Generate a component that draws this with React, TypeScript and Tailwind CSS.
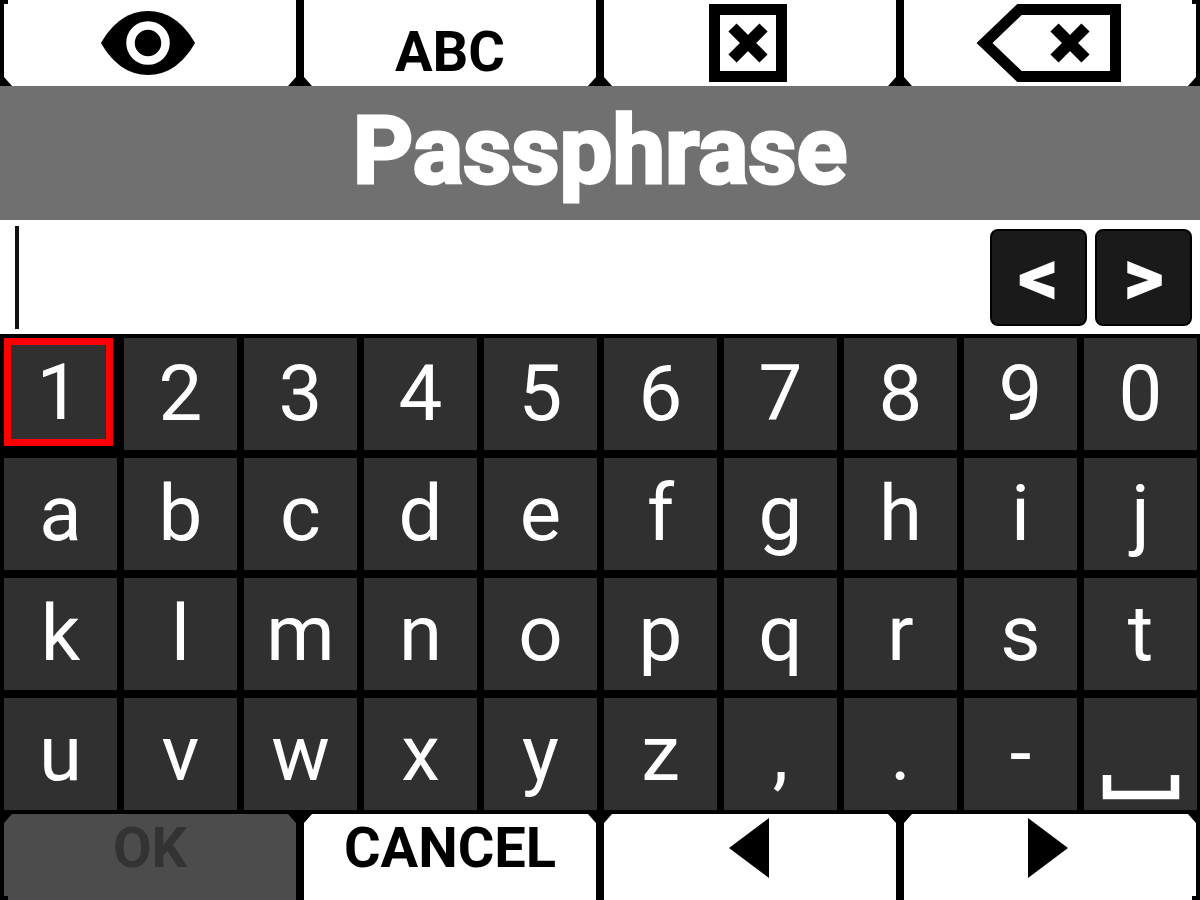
import { useState } from "react";
import type { ReactNode } from "react";

const KEYS = "1234567890abcdefghijklmnopqrstuvwxyz,.-".split("");

const TOP_SHAPES = [
  "[clip-path:polygon(4px_0,100%_0,100%_calc(100%-9px),calc(100%-8px)_100%,8px_100%,0_calc(100%-9px),0_4px,4px_4px)]",
  "[clip-path:polygon(0_0,100%_0,100%_calc(100%-9px),calc(100%-8px)_100%,8px_100%,0_calc(100%-9px))]",
  "[clip-path:polygon(0_0,100%_0,100%_calc(100%-9px),calc(100%-8px)_100%,8px_100%,0_calc(100%-9px))]",
  "[clip-path:polygon(0_0,calc(100%-4px)_0,calc(100%-4px)_4px,100%_4px,100%_calc(100%-9px),calc(100%-8px)_100%,8px_100%,0_calc(100%-9px))]",
];

const BOTTOM_SHAPES = [
  "[clip-path:polygon(8px_0,calc(100%-8px)_0,100%_9px,100%_100%,4px_100%,4px_calc(100%-4px),0_calc(100%-4px),0_9px)]",
  "[clip-path:polygon(8px_0,calc(100%-8px)_0,100%_9px,100%_100%,0_100%,0_9px)]",
  "[clip-path:polygon(8px_0,calc(100%-8px)_0,100%_9px,100%_100%,0_100%,0_9px)]",
  "[clip-path:polygon(8px_0,calc(100%-8px)_0,100%_9px,100%_calc(100%-4px),calc(100%-4px)_calc(100%-4px),calc(100%-4px)_100%,0_100%,0_9px)]",
];

function SoftKey({
  label,
  shape,
  className,
  disabled,
  onClick,
  children,
}: {
  label: string;
  shape: string;
  className: string;
  disabled?: boolean;
  onClick?: () => void;
  children: ReactNode;
}) {
  return (
    <button
      type="button"
      aria-label={label}
      disabled={disabled}
      onClick={onClick}
      className={`flex h-full justify-center bg-white text-[56px] leading-[60px] font-bold text-black disabled:bg-[#4c4c4c] disabled:text-[#333333] ${shape} ${className}`}
    >
      {children}
    </button>
  );
}

function EyeIcon() {
  return (
    <svg viewBox="0 0 94 66" className="h-[66px] w-[94px]" aria-hidden="true">
      <path d="M0 33C12 12 28 1 47 1s35 11 47 32C82 54 66 65 47 65S12 54 0 33Z" fill="black" />
      <circle cx="47" cy="33" r="17.5" fill="black" stroke="white" strokeWidth="8.5" />
    </svg>
  );
}

function ClearIcon() {
  return (
    <svg viewBox="0 0 80 80" className="h-20 w-20" fill="none" stroke="black" aria-hidden="true">
      <rect x="6.5" y="6.5" width="67" height="67" strokeWidth="11" />
      <path d="M24.5 24.5L55.5 55.5M55.5 24.5L24.5 55.5" strokeWidth="11.5" />
    </svg>
  );
}

function BackspaceIcon() {
  return (
    <svg viewBox="0 0 148 80" className="h-20 w-[148px]" fill="none" stroke="black" aria-hidden="true">
      <path d="M10.5 40L45.5 6.5H141.5V73.5H45.5Z" strokeWidth="11" />
      <path d="M80.5 24.5L111.5 55.5M111.5 24.5L80.5 55.5" strokeWidth="11.5" />
    </svg>
  );
}

function CursorButton({ label, children }: { label: string; children: ReactNode }) {
  return (
    <button
      type="button"
      aria-label={label}
      className="flex h-[97px] w-[97px] items-center justify-center rounded-lg border-2 border-black bg-[#1a1a1a] text-[80px] leading-none font-black text-white"
    >
      {children}
    </button>
  );
}

export default function App() {
  const [value, setValue] = useState("");
  const [selected, setSelected] = useState(0);

  const press = (index: number, char: string) => {
    setSelected(index);
    setValue((v) => v + char);
  };

  const keyClass = (index: number) =>
    `flex items-center justify-center bg-[#303030] text-[78px] leading-none ${
      index === selected ? "mr-1 mb-1 border-[7px] border-[#ff0000] pt-0.5" : ""
    }`;

  return (
    <main className="flex min-h-screen flex-col bg-black font-[Roboto,sans-serif] text-white">
      <div className="grid h-[86px] grid-cols-4 gap-2 px-1">
        <SoftKey label="Show passphrase" shape={TOP_SHAPES[0]} className="items-center pr-1">
          <EyeIcon />
        </SoftKey>
        <SoftKey label="ABC" shape={TOP_SHAPES[1]} className="items-end pb-1">
          ABC
        </SoftKey>
        <SoftKey label="Clear" shape={TOP_SHAPES[2]} className="items-center pr-1" onClick={() => setValue("")}>
          <ClearIcon />
        </SoftKey>
        <SoftKey
          label="Backspace"
          shape={TOP_SHAPES[3]}
          className="items-center pr-1"
          onClick={() => setValue((v) => v.slice(0, -1))}
        >
          <BackspaceIcon />
        </SoftKey>
      </div>

      <div className="flex h-[134px] items-center justify-center bg-[#707070] pb-1">
        <label
          htmlFor="passphrase"
          className="text-[94px] leading-none font-bold [-webkit-text-stroke:3px_white]"
        >
          Passphrase
        </label>
      </div>

      <div className="flex h-[114px] items-center gap-2 bg-white pr-2 pl-[15px]">
        <input
          id="passphrase"
          type="text"
          value={value}
          onChange={(e) => setValue(e.target.value)}
          className="h-[103px] min-w-0 flex-1 border-l-4 border-[#111111] bg-white text-[80px] text-black outline-none"
        />
        <CursorButton label="Move cursor left">&lt;</CursorButton>
        <CursorButton label="Move cursor right">&gt;</CursorButton>
      </div>

      <div className="grid flex-1 auto-rows-fr grid-cols-10 gap-x-[7px] gap-y-2 py-1 pr-[3px] pl-1">
        {KEYS.map((char, index) => (
          <button key={char} type="button" className={keyClass(index)} onClick={() => press(index, char)}>
            {char}
          </button>
        ))}
        <button
          type="button"
          aria-label="Space"
          className={keyClass(KEYS.length)}
          onClick={() => press(KEYS.length, " ")}
        >
          <svg viewBox="0 0 112 112" className="h-28 w-28" aria-hidden="true">
            <path d="M22 77V97H90V77" fill="none" stroke="white" strokeWidth="8.5" />
          </svg>
        </button>
      </div>

      <div className="grid h-[86px] grid-cols-4 gap-2 px-1">
        <SoftKey label="OK" shape={BOTTOM_SHAPES[0]} className="items-start pt-1" disabled={value === ""}>
          OK
        </SoftKey>
        <SoftKey label="Cancel" shape={BOTTOM_SHAPES[1]} className="items-start pt-1">
          CANCEL
        </SoftKey>
        <SoftKey label="Previous" shape={BOTTOM_SHAPES[2]} className="items-start pt-1 pr-0.5">
          <svg viewBox="0 0 40 60" className="h-[60px] w-10" aria-hidden="true">
            <path d="M40 0V60L0 30Z" fill="black" />
          </svg>
        </SoftKey>
        <SoftKey label="Next" shape={BOTTOM_SHAPES[3]} className="items-start pt-1 pr-1">
          <svg viewBox="0 0 40 60" className="h-[60px] w-10" aria-hidden="true">
            <path d="M0 0V60L40 30Z" fill="black" />
          </svg>
        </SoftKey>
      </div>
    </main>
  );
}
